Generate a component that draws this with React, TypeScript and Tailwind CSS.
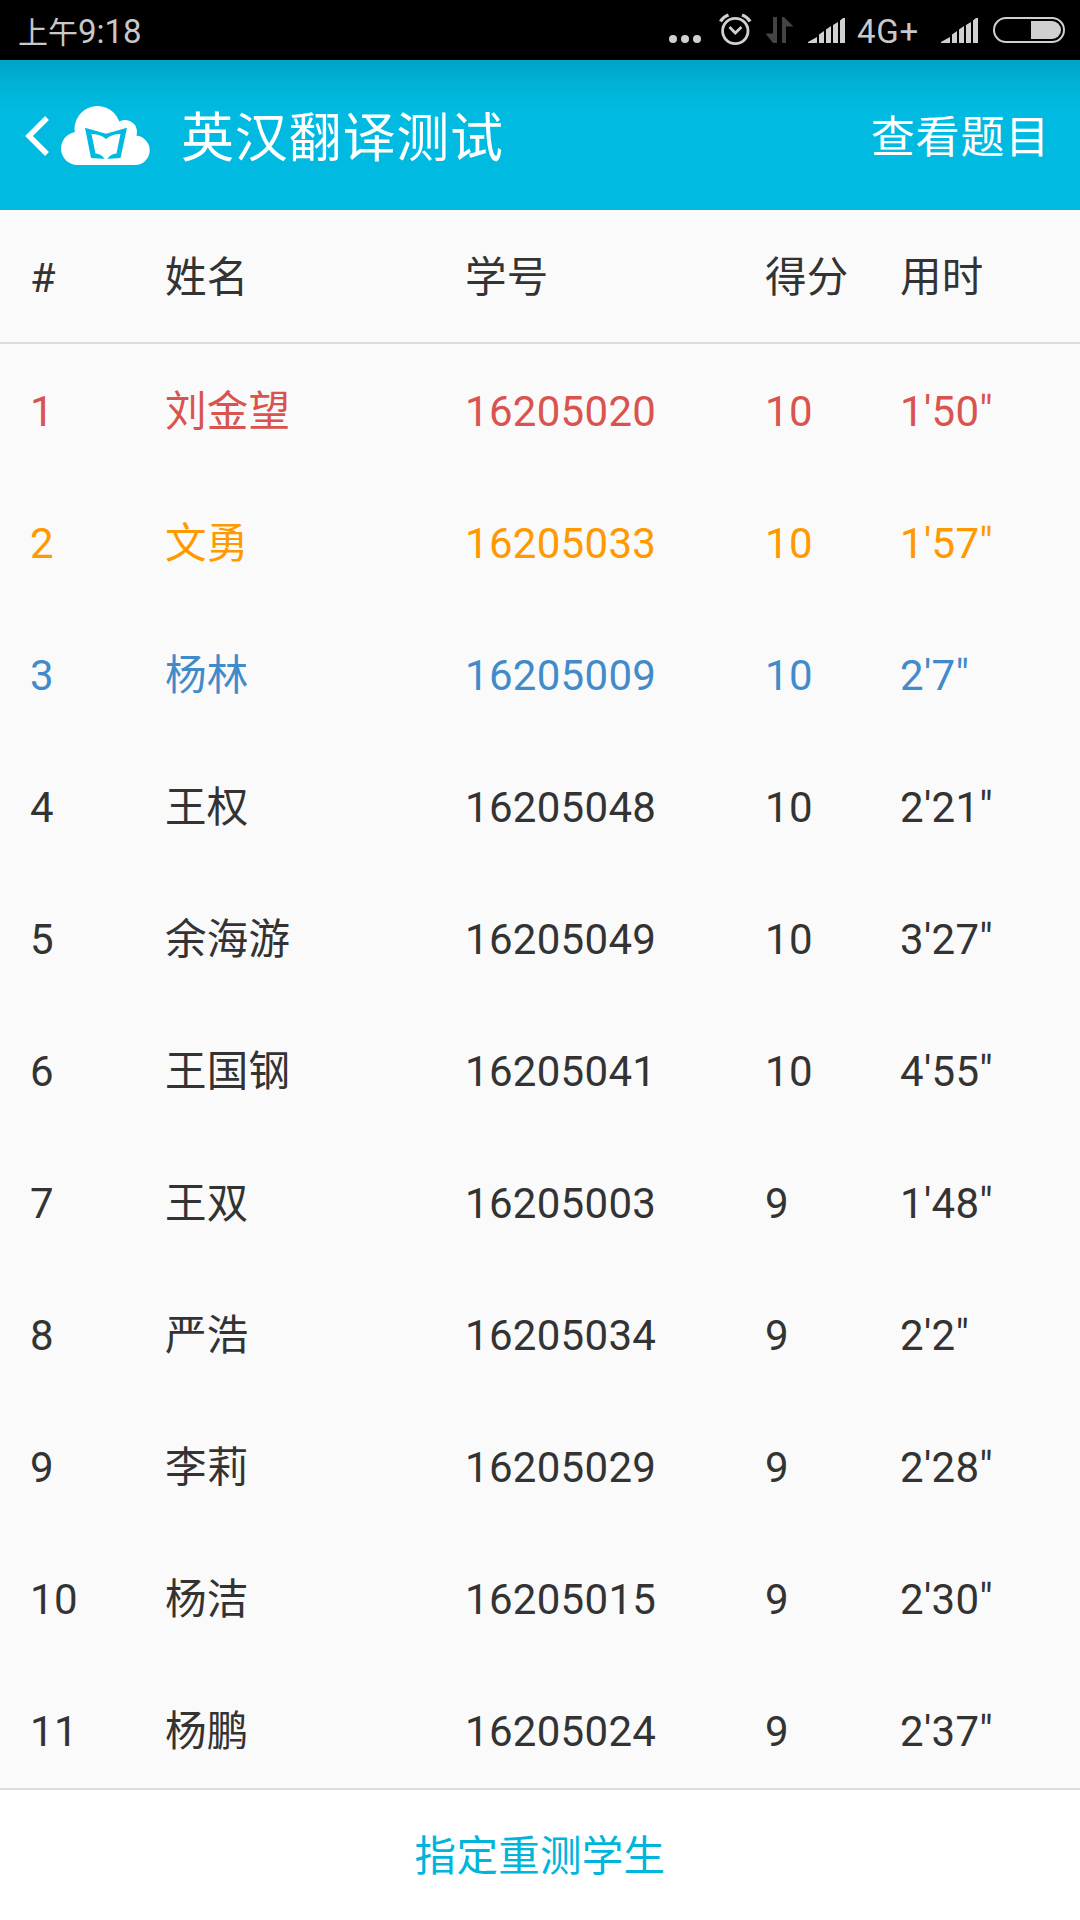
const rows = [
  ["1", "刘金望", "16205020", "10", "1'50\"", "text-[#d9534f]"],
  ["2", "文勇", "16205033", "10", "1'57\"", "text-[#ff9900]"],
  ["3", "杨林", "16205009", "10", "2'7\"", "text-[#428bca]"],
  ["4", "王权", "16205048", "10", "2'21\"", ""],
  ["5", "余海游", "16205049", "10", "3'27\"", ""],
  ["6", "王国钢", "16205041", "10", "4'55\"", ""],
  ["7", "王双", "16205003", "9", "1'48\"", ""],
  ["8", "严浩", "16205034", "9", "2'2\"", ""],
  ["9", "李莉", "16205029", "9", "2'28\"", ""],
  ["10", "杨洁", "16205015", "9", "2'30\"", ""],
  ["11", "杨鹏", "16205024", "9", "2'37\"", ""],
];

function Signal() {
  return (
    <svg className="shrink-0" width="38" height="60" viewBox="0 0 38 60" fill="#d0d0d0">
      <path d="M0 43V42L9 37V43zM11 43V34.5L16 31V43zM18 43V29.5L23 26V43zM25 43V25L30 22V43zM32 43V20.5L35 18H37V43z" />
    </svg>
  );
}

function StatusIcons() {
  return (
    <svg className="mr-[15px] shrink-0" width="125" height="60" viewBox="668 0 125 60" fill="none" stroke="#d0d0d0">
      <g fill="#d0d0d0" stroke="none">
        <circle cx="673" cy="39" r="4" />
        <circle cx="685" cy="39" r="4" />
        <circle cx="697" cy="39" r="4" />
      </g>
      <circle cx="735.3" cy="31" r="12.7" strokeWidth="2.8" />
      <path d="M729.5 27L735.3 33L741.5 27" strokeWidth="2.8" />
      <path d="M720.5 21.5Q723 17 728.5 15M750 21.5Q747.500 17 742 15" strokeWidth="3.4" />
      <path d="M773 17h4v26h-4L765.500 33.500H773zM782 43V17h2L793.500 26.500H786V43z" fill="#444" stroke="none" />
    </svg>
  );
}

function Logo() {
  return (
    <svg className="mt-0.5 shrink-0" width="130" height="66" viewBox="23 103 130 66">
      <path d="M47 118L29 136L47 154" fill="none" stroke="#fff" strokeWidth="5.4" />
      <g fill="#fff">
        <circle cx="97.500" cy="129" r="23" />
        <circle cx="125" cy="132" r="12" />
        <circle cx="77.500" cy="148.500" r="16.500" />
        <circle cx="135" cy="150.300" r="14.700" />
        <path d="M77 135h58v30H77z" />
      </g>
      <path d="M85 127.700L106 133.800L127 127.700L120.500 158L106 159L91 158z" fill="#00bae1" />
      <path d="M91.500 134Q100 134 106 139Q112 134 120.500 134L116.500 153.500Q110 154 107.500 159H104.500Q102 154 95.500 153.500z" fill="#fff" />
    </svg>
  );
}

export default function App() {
  return (
    <div className="flex h-[1920px] w-[1080px] flex-col overflow-hidden bg-[#fafafa] font-[Roboto,'Noto_Sans_CJK_SC',sans-serif] text-[42px] tracking-[0.3px] text-[#333]">
      <div className="flex h-[60px] shrink-0 items-center bg-black pl-[18px] text-[33px] tracking-normal text-[#c8c8c8]">
        <span className="pt-[3px]"><span className="text-[30px]">上午</span>9:18</span>
        <div className="ml-auto flex items-center pr-[15px]">
          <StatusIcons />
          <Signal />
          <span className="ml-[11px] w-[84px] pt-[3px] tracking-[0.8px]">4G+</span>
          <Signal />
          <svg className="ml-[14px]" width="72" height="60" viewBox="0 0 72 60">
            <rect x="1" y="18" width="70" height="24" rx="12" fill="none" stroke="#d0d0d0" strokeWidth="2" />
            <path d="M38 21H59a9 9 0 0 1 0 18H38z" fill="#d0d0d0" />
          </svg>
        </div>
      </div>
      <div className="flex h-[150px] shrink-0 items-center bg-[#00bae1] bg-linear-to-b from-[#00a3c6] via-[#00b2d6] via-15% to-[#00bae1] to-35% pl-[23px] pr-[30px] text-white">
        <Logo />
        <span className="ml-7 pt-[10px] text-[53px] tracking-[0.8px]">英汉翻译测试</span>
        <span className="ml-auto pt-[6px] text-[44px] tracking-[0.8px]">查看题目</span>
      </div>
      <div className="grid h-[134px] shrink-0 grid-cols-[135px_300px_300px_135px_1fr] items-center border-b-2 border-[#ddd] pl-[30px] pt-1 text-[41.5px]">
        <span>#</span><span>姓名</span><span>学号</span><span>得分</span><span>用时</span>
      </div>
      <div className="min-h-0 flex-1 overflow-hidden">
        {rows.map((r) => (
          <div key={r[0]} className={"grid h-[132px] grid-cols-[135px_300px_300px_135px_1fr] items-center pl-[30px] pt-[3px] " + r[5]}>
            {r.slice(0, 5).map((c, i) => <span key={i} className={i === 1 ? "pt-0.5 text-[41.5px]" : ""}>{c}</span>)}
          </div>
        ))}
      </div>
      <div className="flex h-[132px] shrink-0 items-center justify-center border-t-2 border-[#ddd] bg-white pt-[5px] text-[41.5px] text-[#00b4dc]">指定重测学生</div>
    </div>
  );
}
